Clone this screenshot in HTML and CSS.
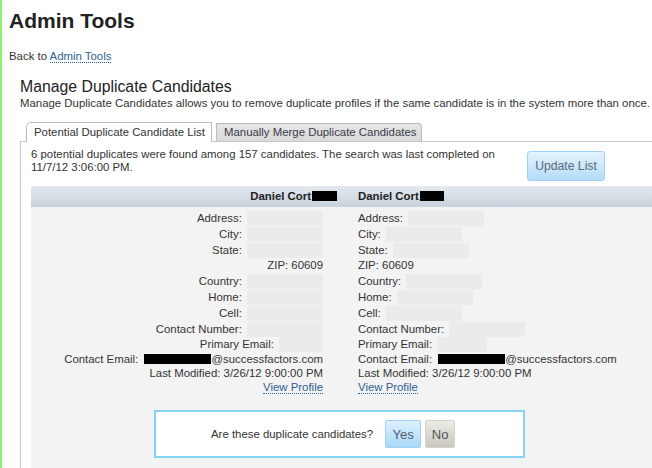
FILE: index.html
```html
<!DOCTYPE html>
<html>
<head>
<meta charset="utf-8">
<link rel="stylesheet" href="styles.css">
</head>
<body>
<div class="page">
  <h1 class="title">Admin Tools</h1>
  <div class="back">Back to <a class="link" href="#">Admin Tools</a></div>
  <div class="section">
    <h2 class="heading">Manage Duplicate Candidates</h2>
    <p class="desc">Manage Duplicate Candidates allows you to remove duplicate profiles if the same candidate is in the system more than once.</p>
    <div class="tabs">
      <div class="tab tab-active">Potential Duplicate Candidate List</div>
      <div class="tab tab-inactive">Manually Merge Duplicate Candidates</div>
    </div>
    <div class="panel">
      <div class="summary">
        <div class="summary-text">6 potential duplicates were found among 157 candidates. The search was last completed on<br>11/7/12 3:06:00 PM.</div>
        <button class="btn-update">Update List</button>
      </div>
      <div class="compare">
        <div class="hdr">
          <div class="hdr-left">Daniel Cort<span class="redact r-name-l"></span></div>
          <div class="hdr-right">Daniel Cort<span class="redact r-name-r"></span></div>
        </div>
        <div class="cols">
          <div class="col col-left">
            <div class="row">Address: <span class="blur"></span></div>
            <div class="row">City: <span class="blur"></span></div>
            <div class="row">State: <span class="blur"></span></div>
            <div class="row row-zip">ZIP: 60609</div>
            <div class="row">Country: <span class="blur"></span></div>
            <div class="row">Home: <span class="blur"></span></div>
            <div class="row">Cell: <span class="blur"></span></div>
            <div class="row">Contact Number: <span class="blur"></span></div>
            <div class="row row-pe">Primary Email: <span class="blur blur-sm"></span></div>
            <div class="row row-tight">Contact Email: <span class="redact r-email"></span>@successfactors.com</div>
            <div class="row row-tight">Last Modified: 3/26/12 9:00:00 PM</div>
            <div class="row row-tight"><a class="link" href="#">View Profile</a></div>
          </div>
          <div class="col col-right">
            <div class="row">Address: <span class="blur"></span></div>
            <div class="row">City: <span class="blur"></span></div>
            <div class="row">State: <span class="blur"></span></div>
            <div class="row row-zip">ZIP: 60609</div>
            <div class="row">Country: <span class="blur"></span></div>
            <div class="row">Home: <span class="blur"></span></div>
            <div class="row">Cell: <span class="blur"></span></div>
            <div class="row">Contact Number: <span class="blur"></span></div>
            <div class="row row-pe">Primary Email: <span class="blur blur-sm"></span></div>
            <div class="row row-tight">Contact Email: <span class="redact r-email"></span>@successfactors.com</div>
            <div class="row row-tight">Last Modified: 3/26/12 9:00:00 PM</div>
            <div class="row row-tight"><a class="link" href="#">View Profile</a></div>
          </div>
        </div>
        <div class="question">
          <span class="q-text">Are these duplicate candidates?</span>
          <button class="btn-yes">Yes</button>
          <button class="btn-no">No</button>
        </div>
      </div>
    </div>
  </div>
</div>
</body>
</html>
```

FILE: styles.css
```css
html, body {
  margin: 0;
  padding: 0;
  overflow: hidden;
  background: #ffffff;
}
body {
  font-family: "Liberation Sans", Arial, sans-serif;
  font-size: 11.4px;
  color: #333333;
  border-left: 2px solid #8ef36e;
  min-height: 468px;
  box-sizing: border-box;
}
.page {
  padding-left: 7px;
  width: 643px;
}
.title {
  margin: 0;
  padding-top: 9px;
  font-size: 21px;
  line-height: 24px;
  font-weight: bold;
  color: #222222;
}
.back {
  margin-top: 16px;
  line-height: 14px;
}
.link {
  color: #2d5f94;
  text-decoration: none;
  border-bottom: 1px dotted #2d5f94;
}
.section {
  padding-left: 11px;
  margin-top: 15px;
}
.heading {
  margin: 0;
  font-size: 15.8px;
  font-weight: normal;
  line-height: 18px;
  color: #222222;
}
.desc {
  margin: 0;
  line-height: 14px;
  white-space: nowrap;
}
.tabs {
  display: flex;
  gap: 4px;
  margin-top: 12px;
  padding-left: 6px;
  align-items: flex-end;
}
.tab {
  padding: 0 7px;
  line-height: 18px;
  border: 1px solid #b9bcc4;
  border-bottom: none;
  color: #333333;
}
.tab-active {
  background: #ffffff;
  height: 19px;
  border-top-left-radius: 5px;
  margin-bottom: -1px;
  position: relative;
  z-index: 1;
  padding: 0 6px 0 7px;
}
.tab-inactive {
  background: linear-gradient(#e6e6e6, #d9d9d9);
  height: 17px;
  line-height: 17px;
  border-top-right-radius: 4px;
  color: #3a3a4a;
  padding: 0 5px 0 7px;
}
.panel {
  border-left: 1px solid #c3c6ce;
  border-top: 1px solid #c3c6ce;
  padding-left: 10px;
  min-height: 330px;
}
.summary {
  display: flex;
  align-items: flex-start;
  padding-top: 6px;
  height: 38px;
}
.summary-text {
  line-height: 13px;
  width: 480px;
}
.btn-update {
  margin-left: 16px;
  margin-top: 3px;
  width: 78px;
  height: 30px;
  font-family: "Liberation Sans", Arial, sans-serif;
  font-size: 12.2px;
  color: #5b6878;
  border: 1px solid #9fd2f4;
  border-radius: 3px;
  background: linear-gradient(#e4f3fe, #b4dcf8);
  padding: 0;
}
.compare {
  background: #f3f3f3;
  padding-bottom: 20px;
}
.hdr {
  display: grid;
  grid-template-columns: 313px 1fr;
  height: 21px;
  line-height: 21px;
  background: linear-gradient(#e3e9ef, #c8d2dc);
  font-weight: bold;
  color: #222222;
}
.hdr-left {
  text-align: right;
  padding-right: 7px;
}
.hdr-right {
  padding-left: 14px;
}
.redact {
  display: inline-block;
  background: #000000;
  height: 10px;
  vertical-align: -1px;
}
.r-name-l { width: 25px; margin-left: 1px; }
.r-name-r { width: 24px; margin-left: 1px; }
.r-email { width: 67px; margin-left: 3px; }
.cols {
  display: grid;
  grid-template-columns: 313px 1fr;
  padding-top: 3px;
}
.col-left {
  text-align: right;
  padding-right: 21px;
}
.col-right {
  padding-left: 14px;
}
.row {
  height: 16px;
  line-height: 16px;
  white-space: nowrap;
}
.row-zip {
  height: 15px;
  line-height: 15px;
}
.row-pe {
  height: 15px;
  line-height: 15px;
}
.row-tight {
  height: 14px;
  line-height: 14px;
}
.blur {
  display: inline-block;
  width: 76px;
  height: 15px;
  background: #ebebeb;
  vertical-align: middle;
  margin-left: 2px;
}
.blur-sm {
  width: 50px;
}
.col-left .blur-sm {
  width: 44px;
}
.question {
  margin: 16px 0 0 123px;
  height: 44px;
  border: 2px solid #86d3f7;
  background: #ffffff;
  display: flex;
  align-items: center;
  padding-left: 55px;
  box-sizing: content-box;
  width: 312px;
}
.q-text {
  margin-right: 12px;
}
.btn-yes, .btn-no {
  height: 28px;
  font-family: "Liberation Sans", Arial, sans-serif;
  font-size: 13px;
  padding: 0;
  border-radius: 2px;
}
.btn-yes {
  width: 36px;
  color: #4d5c6c;
  border: 1px solid #9fd2f4;
  background: linear-gradient(#dcf0fe, #a9d8f8);
}
.btn-no {
  width: 30px;
  margin-left: 4px;
  color: #555555;
  border: 1px solid #d6d4c8;
  background: linear-gradient(#ebebe6, #c9c8c0);
}
```
